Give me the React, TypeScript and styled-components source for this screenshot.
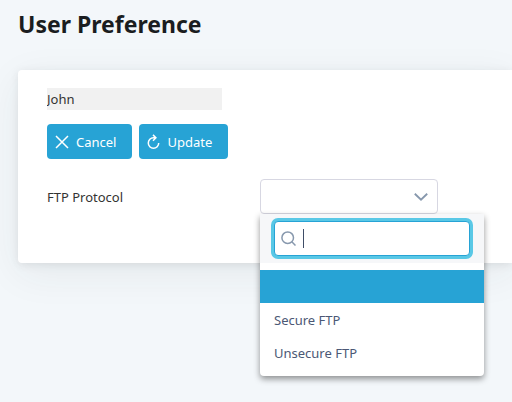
import React, { useState } from 'react';
import styled, { createGlobalStyle } from 'styled-components';

const GlobalStyle = createGlobalStyle`
  * {
    box-sizing: border-box;
  }
  body {
    margin: 0;
    min-height: 100vh;
    overflow-x: hidden;
    background: #f3f7fa;
    color: #333333;
    font-family: 'Segoe UI', 'Noto Sans', sans-serif;
    font-size: 13px;
    line-height: 20px;
  }
  button,
  input {
    font: inherit;
  }
`;

const Page = styled.main`
  padding: 8px 0 0 18px;
`;

const Title = styled.h1`
  margin: 0 0 30px;
  color: #1a1d20;
  font-size: 23px;
  line-height: 32px;
  font-weight: 700;
`;

const Card = styled.section`
  min-height: 193px;
  padding: 18px 28px 49px 29px;
  background: #ffffff;
  border-radius: 4px 0 0 4px;
  box-shadow: 0 10px 40px rgba(41, 61, 61, 0.07), 0 2px 9px rgba(62, 57, 57, 0.1);
`;

const NameInput = styled.input`
  display: block;
  width: 175px;
  height: 22px;
  padding: 0;
  border: 0;
  background: #f1f1f1;
  color: #333333;
`;

const Actions = styled.div`
  display: flex;
  gap: 7px;
  margin: 14px 0 20px;
`;

const ActionButton = styled.button`
  display: flex;
  align-items: center;
  gap: 7px;
  height: 35px;
  padding: 0 16px 0 8px;
  border: 0;
  border-radius: 4px;
  background: #27a3d5;
  color: #ffffff;
`;

const Field = styled.div`
  display: grid;
  grid-template-columns: 213px 1fr;
  align-items: center;
`;

const Dropdown = styled.div`
  position: relative;
  width: 178px;
`;

const Trigger = styled.button`
  display: flex;
  align-items: center;
  justify-content: flex-end;
  width: 100%;
  height: 35px;
  padding: 0 9px;
  border: 1px solid #d7d7e2;
  border-radius: 4px;
  background: #ffffff;
  color: #8798ad;
`;

const Panel = styled.div`
  position: absolute;
  top: 100%;
  left: 0;
  width: 224px;
  border-radius: 0 0 4px 4px;
  background: #ffffff;
  color: #4b5875;
  box-shadow: 0 3px 6px rgba(0, 0, 0, 0.42);
`;

const SearchArea = styled.div`
  padding: 7px 14px;
  background: #f6f7f9;
`;

const SearchBox = styled.label`
  display: flex;
  align-items: center;
  height: 35px;
  padding: 0 6px;
  gap: 7px;
  border: 1px solid #27a3d5;
  border-radius: 4px;
  background: #ffffff;
  box-shadow: 0 0 0 3px #59c8e6;
  color: #8798ad;
`;

const Caret = styled.span`
  flex: none;
  width: 1px;
  height: 19px;
  background: #3f4d67;
`;

const SearchInput = styled.input`
  flex: 1;
  min-width: 0;
  padding: 0;
  border: 0;
  outline: 0;
  background: transparent;
  caret-color: transparent;
  color: #4b5875;
`;

const Options = styled.ul`
  margin: 0;
  padding: 7px 0;
  list-style: none;
`;

const Option = styled.li<{ $active: boolean }>`
  height: 33px;
  padding: 0 14px;
  line-height: 35px;
  background: ${({ $active }) => ($active ? '#27a3d5' : 'transparent')};
  color: ${({ $active }) => ($active ? '#ffffff' : 'inherit')};
`;

const Icon = styled.svg`
  flex: none;
  fill: none;
  stroke: currentColor;
`;

const CloseIcon = () => (
  <Icon width="14" height="14" viewBox="0 0 14 14" strokeWidth="1.5" aria-hidden="true">
    <path d="M1 1l12 12M13 1L1 13" />
  </Icon>
);

const ReloadIcon = () => (
  <Icon width="13" height="16" viewBox="0 0 13 16" strokeWidth="1.5" aria-hidden="true">
    <path d="M8.500 3.800H6.500a5.200 5.200 0 1 0 5.200 5.200M6 .9l2.900 2.900L6 6.700" />
  </Icon>
);

const ChevronIcon = () => (
  <Icon width="14" height="8" viewBox="0 0 14 8" strokeWidth="1.9" aria-hidden="true">
    <path d="M.8.8L7 6.6 13.200.8" />
  </Icon>
);

const SearchIcon = () => (
  <Icon width="15" height="15" viewBox="0 0 15 15" strokeWidth="1.5" aria-hidden="true">
    <circle cx="6.700" cy="6.700" r="5.800" />
    <path d="M10.800 10.800l3.700 3.700" />
  </Icon>
);

const protocols = ['', 'Secure FTP', 'Unsecure FTP'];

export default function App() {
  const [name, setName] = useState('John');
  const [active, setActive] = useState(0);
  const [query, setQuery] = useState('');

  return (
    <>
      <GlobalStyle />
      <Page>
        <Title>User Preference</Title>
        <Card>
          <NameInput aria-label="Name" value={name} onChange={(e) => setName(e.target.value)} />
          <Actions>
            <ActionButton type="button">
              <CloseIcon />
              Cancel
            </ActionButton>
            <ActionButton type="button">
              <ReloadIcon />
              Update
            </ActionButton>
          </Actions>
          <Field>
            <span id="protocol-label">FTP Protocol</span>
            <Dropdown>
              <Trigger
                type="button"
                aria-labelledby="protocol-label"
                aria-haspopup="listbox"
                aria-expanded="true"
                aria-controls="protocol-options"
              >
                <ChevronIcon />
              </Trigger>
              <Panel>
                <SearchArea>
                  <SearchBox>
                    <SearchIcon />
                    {query === '' && <Caret />}
                    <SearchInput
                      aria-label="Search protocols"
                      value={query}
                      onChange={(e) => setQuery(e.target.value)}
                    />
                  </SearchBox>
                </SearchArea>
                <Options id="protocol-options" role="listbox" aria-labelledby="protocol-label">
                  {protocols.map((protocol, index) => (
                    <Option
                      key={index}
                      role="option"
                      aria-selected={index === active}
                      $active={index === active}
                      onClick={() => setActive(index)}
                    >
                      {protocol}
                    </Option>
                  ))}
                </Options>
              </Panel>
            </Dropdown>
          </Field>
        </Card>
      </Page>
    </>
  );
}
